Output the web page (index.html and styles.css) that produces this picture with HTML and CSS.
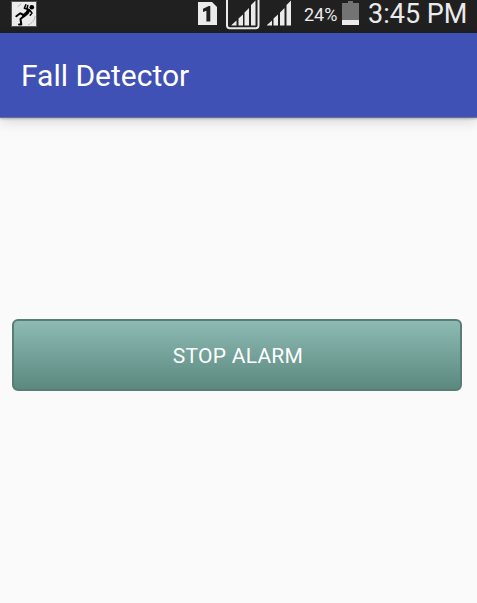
FILE: index.html
```html
<!DOCTYPE html>
<html lang="en">
<head>
<meta charset="utf-8">
<title>Fall Detector</title>
<link rel="stylesheet" href="styles.css">
</head>
<body>
<header class="status">
  <svg class="fall-icon" width="26" height="26" viewBox="0 0 26 26">
    <rect x=".5" y=".5" width="25" height="25" fill="#ebebeb" stroke="#555"/>
    <circle cx="20.8" cy="6.2" r="2.3"/>
    <g fill="none" stroke="#000" stroke-linecap="round" stroke-linejoin="round">
      <path d="M17.5 9.5 Q16.5 12.5 13 14.5" stroke-width="3.6"/>
      <path d="M17.5 8.5 13.3 7.3 14.8 3.8 M15.8 8 16.8 4.5M19 9.5 21 12 19.2 14.2" stroke-width="1.5"/>
      <path d="M12.5 14 9.3 12.3 5.3 15.2M12.5 15.5 9.5 18 10.3 23.5H8" stroke-width="2"/>
      <path d="M7 5.5 10 3M24 15.5C23.5 19.5 20.5 23 16.5 24" stroke="#999" stroke-width=".7" stroke-dasharray="2 1"/>
    </g>
  </svg>
  <svg class="sim" width="19" height="24" viewBox="0 0 19 24">
    <path fill="#ebebeb" d="M0 0H14L19 5V23H0Z"/>
    <path fill="#202020" d="M12.3 4V19.5H8.4V8.7L5 10V6.7L10.8 4Z"/>
  </svg>
  <svg class="framed-signal" width="34" height="30" viewBox="0 0 34 30">
    <path d="M1 0V25.5Q1 28.2 3.7 28.2H29.8Q32.5 28.2 32.5 25.5V0" fill="none" stroke="#ebebeb" stroke-width="2"/>
    <path fill="#ebebeb" d="M5.5 25.5V25L10.5 20.5V25.5ZM12.5 25.5V18.5L17 14.5V25.5ZM18.5 25.5V12.5L23 8V25.5ZM25 25.5V5L29.5 .5V25.5Z"/>
  </svg>
  <svg class="signal" width="25" height="26" viewBox="5 0 25 26">
    <path fill="#ebebeb" d="M5 25.5V25L10 20.5V25.5ZM11.5 25.5V18.5L16 14.5V25.5ZM18 25.5V12.5L22.5 8V25.5ZM24.5 25.5V5L29 .5V25.5Z"/>
  </svg>
  <span class="percent">24%</span>
  <svg class="battery" width="17" height="24" viewBox="0 0 17 24">
    <path fill="#737373" d="M6 0H11V2H17V19H0V2H6Z"/>
    <path fill="#ebebeb" d="M0 19H17V24H0Z"/>
  </svg>
  <time class="clock">3:45 PM</time>
</header>
<div class="appbar"><h1>Fall Detector</h1></div>
<main><button class="stop">STOP ALARM</button></main>
</body>
</html>
```
FILE: styles.css
```css
* { box-sizing: border-box; }
body {
  margin: 0;
  height: 603px;
  display: flex;
  flex-direction: column;
  background: #fafafa;
  font-family: Roboto, sans-serif;
}
.status {
  height: 33px;
  flex: none;
  display: flex;
  align-items: flex-start;
  padding-left: 11px;
  background: #202020;
  color: #ebebeb;
  white-space: nowrap;
}
.status svg { flex: none; }
.fall-icon { margin-top: 1px; }
.sim { margin: 2px 0 0 161px; }
.framed-signal { margin-left: 9px; }
.signal { margin-left: 7px; }
.percent {
  width: 38px;
  margin-left: 12px;
  font-size: 18px;
  line-height: 30px;
}
.battery { margin-top: 1px; }
.clock {
  margin-left: 9px;
  font-size: 27px;
  line-height: 29px;
}
.appbar {
  height: 85px;
  flex: none;
  display: flex;
  align-items: center;
  padding: 2px 0 0 21px;
  background: #4051b5;
  border-bottom: 1px solid #6b7196;
  box-shadow: 0 1px 2px rgba(0, 0, 0, .22), 0 4px 12px rgba(0, 0, 0, .14);
}
h1 {
  margin: 0;
  color: #fff;
  font-size: 30px;
  font-weight: 400;
  line-height: 36px;
}
main { padding: 201px 15px 0 12px; }
.stop {
  display: block;
  width: 100%;
  height: 72px;
  padding: 2px 0 0 2px;
  border: 2px solid #5b7c75;
  border-radius: 6px;
  background: linear-gradient(#8dbab2, #5b887f);
  color: #fff;
  font: 400 21px/30px Roboto, sans-serif;
  letter-spacing: .25px;
}
```
